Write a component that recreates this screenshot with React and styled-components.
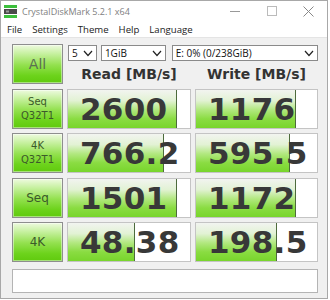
import styled, { createGlobalStyle } from "styled-components";

const Global = createGlobalStyle`
  html, body {
    margin: 0;
    padding: 0;
    background: #ffffff;
  }
  body {
    font-family: "Noto Sans", "DejaVu Sans", sans-serif;
  }
`;

const Window = styled.div`
  width: 326px;
  height: 297px;
  border: 1px solid #a8a8a8;
  background: #f0f0f0;
  display: flex;
  flex-direction: column;
  overflow: hidden;
`;

const TitleBar = styled.div`
  height: 20px;
  background: #ffffff;
  display: flex;
  align-items: center;
  padding-left: 3px;
`;

const Title = styled.span`
  font-family: "Open Sans", "Noto Sans", sans-serif;
  font-size: 9px;
  color: #808080;
  margin-left: 5px;
  flex: 1;
`;

const Caption = styled.div`
  width: 37px;
  height: 20px;
  display: flex;
  align-items: center;
  justify-content: center;
`;

const MenuBar = styled.div`
  height: 16px;
  background: #ffffff;
  border-bottom: 1px solid #e4e4e4;
  display: flex;
  align-items: center;
  padding-left: 6px;
  gap: 10px;
`;

const MenuItem = styled.span`
  font-family: "Open Sans", "Noto Sans", sans-serif;
  font-size: 9.6px;
  color: #222;
`;

const Client = styled.div`
  padding: 6px 0 0 11px;
  display: grid;
  grid-template-columns: 51px 124px 123px;
  column-gap: 4px;
  row-gap: 4.6px;
`;

const GreenButton = styled.div`
  height: ${(p) => p.$h || 40}px;
  box-sizing: border-box;
  border: 1px solid #8e8e8e;
  background: linear-gradient(to bottom, #eefadf 0%, #c8f1a2 22%, #94e150 52%, #6dd31c 80%, #60ca0e 100%);
  box-shadow: inset 0 0 0 1px rgba(255, 255, 255, 0.45);
  display: flex;
  flex-direction: column;
  align-items: center;
  justify-content: center;
  font-family: "DejaVu Sans", "Liberation Sans", sans-serif;
  font-size: ${(p) => p.$fs || 10}px;
  line-height: 14px;
  color: ${(p) => p.$color || "#3b5a2a"};
`;

const TopBlock = styled.div`
  grid-column: 2 / 4;
  display: flex;
  flex-direction: column;
`;

const SelectRow = styled.div`
  display: flex;
  gap: 4px;
  margin: 1px 0 0 1px;
`;

const Select = styled.div`
  width: ${(p) => p.$w}px;
  height: 16px;
  box-sizing: border-box;
  border: 1px solid #8a8a8a;
  background: #fff;
  display: flex;
  align-items: center;
  justify-content: space-between;
  padding: 0 3px 0 3px;
  font-family: "Open Sans", "Noto Sans", sans-serif;
  font-size: 10px;
  color: #111;
  margin-right: ${(p) => p.$mr || 0}px;
`;

const HeaderRow = styled.div`
  display: grid;
  grid-template-columns: 124px 123px;
  column-gap: 4px;
  margin-top: 3px;
`;

const Header = styled.div`
  text-align: center;
  font-family: "DejaVu Sans", "Liberation Sans", sans-serif;
  font-weight: bold;
  font-size: 14px;
  color: #333;
  line-height: 20px;
`;

const Cell = styled.div`
  position: relative;
  height: 40px;
  box-sizing: border-box;
  border: 1px solid #c4c4c4;
  background: #ffffff;
  overflow: hidden;
  display: flex;
  align-items: center;
`;

const Fill = styled.div`
  position: absolute;
  left: 0;
  top: 0;
  bottom: 0;
  background: linear-gradient(to bottom, #f2f4f0 0%, #e2f2d4 28%, #b2e880 52%, #8adc42 76%, #78d52c 100%);
  border-right: 1px solid #4d6b3c;
`;

const Value = styled.span`
  position: relative;
  padding-left: 12px;
  font-family: "DejaVu Sans", "Verdana", sans-serif;
  font-weight: bold;
  font-size: 31px;
  letter-spacing: 0.3px;
  color: #383838;
`;

const Status = styled.div`
  grid-column: 1 / 4;
  height: 24px;
  box-sizing: border-box;
  border: 1px solid #b4b4b4;
  background: #fff;
  margin-top: 2px;
`;

const Chevron = () => (
  <svg width="10" height="7" viewBox="0 0 10 7">
    <path d="M1 1 L5 5.5 L9 1" fill="none" stroke="#222" strokeWidth="1.2" />
  </svg>
);

const AppIcon = () => (
  <svg width="13" height="13" viewBox="0 0 13 13">
    <rect x="0" y="0" width="13" height="3" fill="#3cbf3c" />
    <rect x="0" y="4" width="13" height="5" fill="#4a4a4a" />
    <rect x="2" y="5.5" width="3" height="2" fill="#9a9a9a" />
    <rect x="0" y="10" width="13" height="3" fill="#3cbf3c" />
  </svg>
);

const rows = [
  { label: ["Seq", "Q32T1"], read: "2600", rw: 108, write: "1176", ww: 99 },
  { label: ["4K", "Q32T1"], read: "766.2", rw: 95, write: "595.5", ww: 93 },
  { label: ["Seq"], read: "1501", rw: 108, write: "1172", ww: 99, fs: 12 },
  { label: ["4K"], read: "48.38", rw: 66, write: "198.5", ww: 80, fs: 12 },
];

export default function App() {
  return (
    <>
      <Global />
      <Window>
        <TitleBar>
          <AppIcon />
          <Title>CrystalDiskMark 5.2.1 x64</Title>
          <Caption>
            <svg width="10" height="10" viewBox="0 0 10 10">
              <path d="M0 5.5 H10" stroke="#999" strokeWidth="1" />
            </svg>
          </Caption>
          <Caption>
            <svg width="10" height="10" viewBox="0 0 10 10">
              <rect x="0.5" y="0.5" width="9" height="9" fill="none" stroke="#bbb" strokeWidth="1" />
            </svg>
          </Caption>
          <Caption>
            <svg width="11" height="11" viewBox="0 0 11 11">
              <path d="M0.5 0.5 L10.5 10.5 M10.5 0.5 L0.5 10.5" stroke="#888" strokeWidth="1" />
            </svg>
          </Caption>
        </TitleBar>
        <MenuBar>
          <MenuItem>File</MenuItem>
          <MenuItem>Settings</MenuItem>
          <MenuItem>Theme</MenuItem>
          <MenuItem>Help</MenuItem>
          <MenuItem>Language</MenuItem>
        </MenuBar>
        <Client>
          <GreenButton $fs={14} $color="#5a7052">All</GreenButton>
          <TopBlock>
            <SelectRow>
              <Select $w={29}>
                5 <Chevron />
              </Select>
              <Select $w={65} $mr={2}>
                1GiB <Chevron />
              </Select>
              <Select $w={147}>
                E: 0% (0/238GiB) <Chevron />
              </Select>
            </SelectRow>
            <HeaderRow>
              <Header>Read [MB/s]</Header>
              <Header>Write [MB/s]</Header>
            </HeaderRow>
          </TopBlock>
          {rows.map((r, i) => (
            <Row key={i} r={r} />
          ))}
          <Status />
        </Client>
      </Window>
    </>
  );
}

function Row({ r }) {
  return (
    <>
      <GreenButton $fs={r.fs}>
        {r.label.map((l) => (
          <span key={l}>{l}</span>
        ))}
      </GreenButton>
      <Cell>
        <Fill style={{ width: r.rw }} />
        <Value>{r.read}</Value>
      </Cell>
      <Cell>
        <Fill style={{ width: r.ww }} />
        <Value>{r.write}</Value>
      </Cell>
    </>
  );
}
